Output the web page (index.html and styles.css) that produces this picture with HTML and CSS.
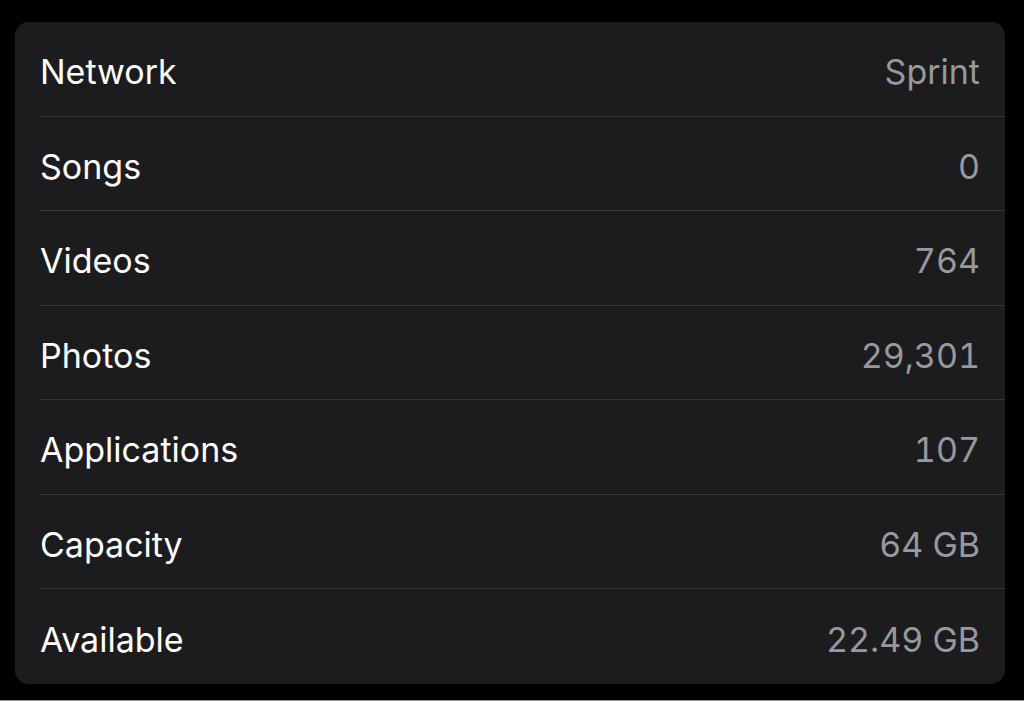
FILE: index.html
```html
<!DOCTYPE html>
<html>
<head>
<meta charset="utf-8">
<link rel="stylesheet" href="styles.css">
</head>
<body>
<div class="screen">
  <div class="card">
    <div class="row"><span class="label">Network</span><span class="value">Sprint</span></div>
    <div class="row"><span class="label">Songs</span><span class="value">0</span></div>
    <div class="row"><span class="label">Videos</span><span class="value">764</span></div>
    <div class="row"><span class="label">Photos</span><span class="value">29,301</span></div>
    <div class="row"><span class="label">Applications</span><span class="value">107</span></div>
    <div class="row"><span class="label">Capacity</span><span class="value">64 GB</span></div>
    <div class="row"><span class="label">Available</span><span class="value">22.49 GB</span></div>
  </div>
</div>
<div class="edge"></div>
</body>
</html>
```
FILE: styles.css
```css
html, body {
  margin: 0;
  padding: 0;
  background: #000;
}
.screen {
  height: 700px;
  padding: 22px 19px 0 15px;
  box-sizing: border-box;
}
.card {
  width: 990px;
  background: #1c1c1e;
  border-radius: 14px;
  overflow: hidden;
  font-family: "Inter", "Liberation Sans", sans-serif;
  font-size: 34px;
}
.row {
  box-sizing: border-box;
  height: 94.5px;
  margin-left: 24px;
  padding: 6px 25px 0 1px;
  display: flex;
  align-items: center;
  justify-content: space-between;
  border-bottom: 1px solid #38383a;
}
.row:last-child {
  border-bottom: none;
}
.label {
  color: #ffffff;
}
.value {
  color: #98989d;
  font-variant-numeric: tabular-nums;
}
.edge {
  height: 1px;
  background: #9a9a9a;
}
```
